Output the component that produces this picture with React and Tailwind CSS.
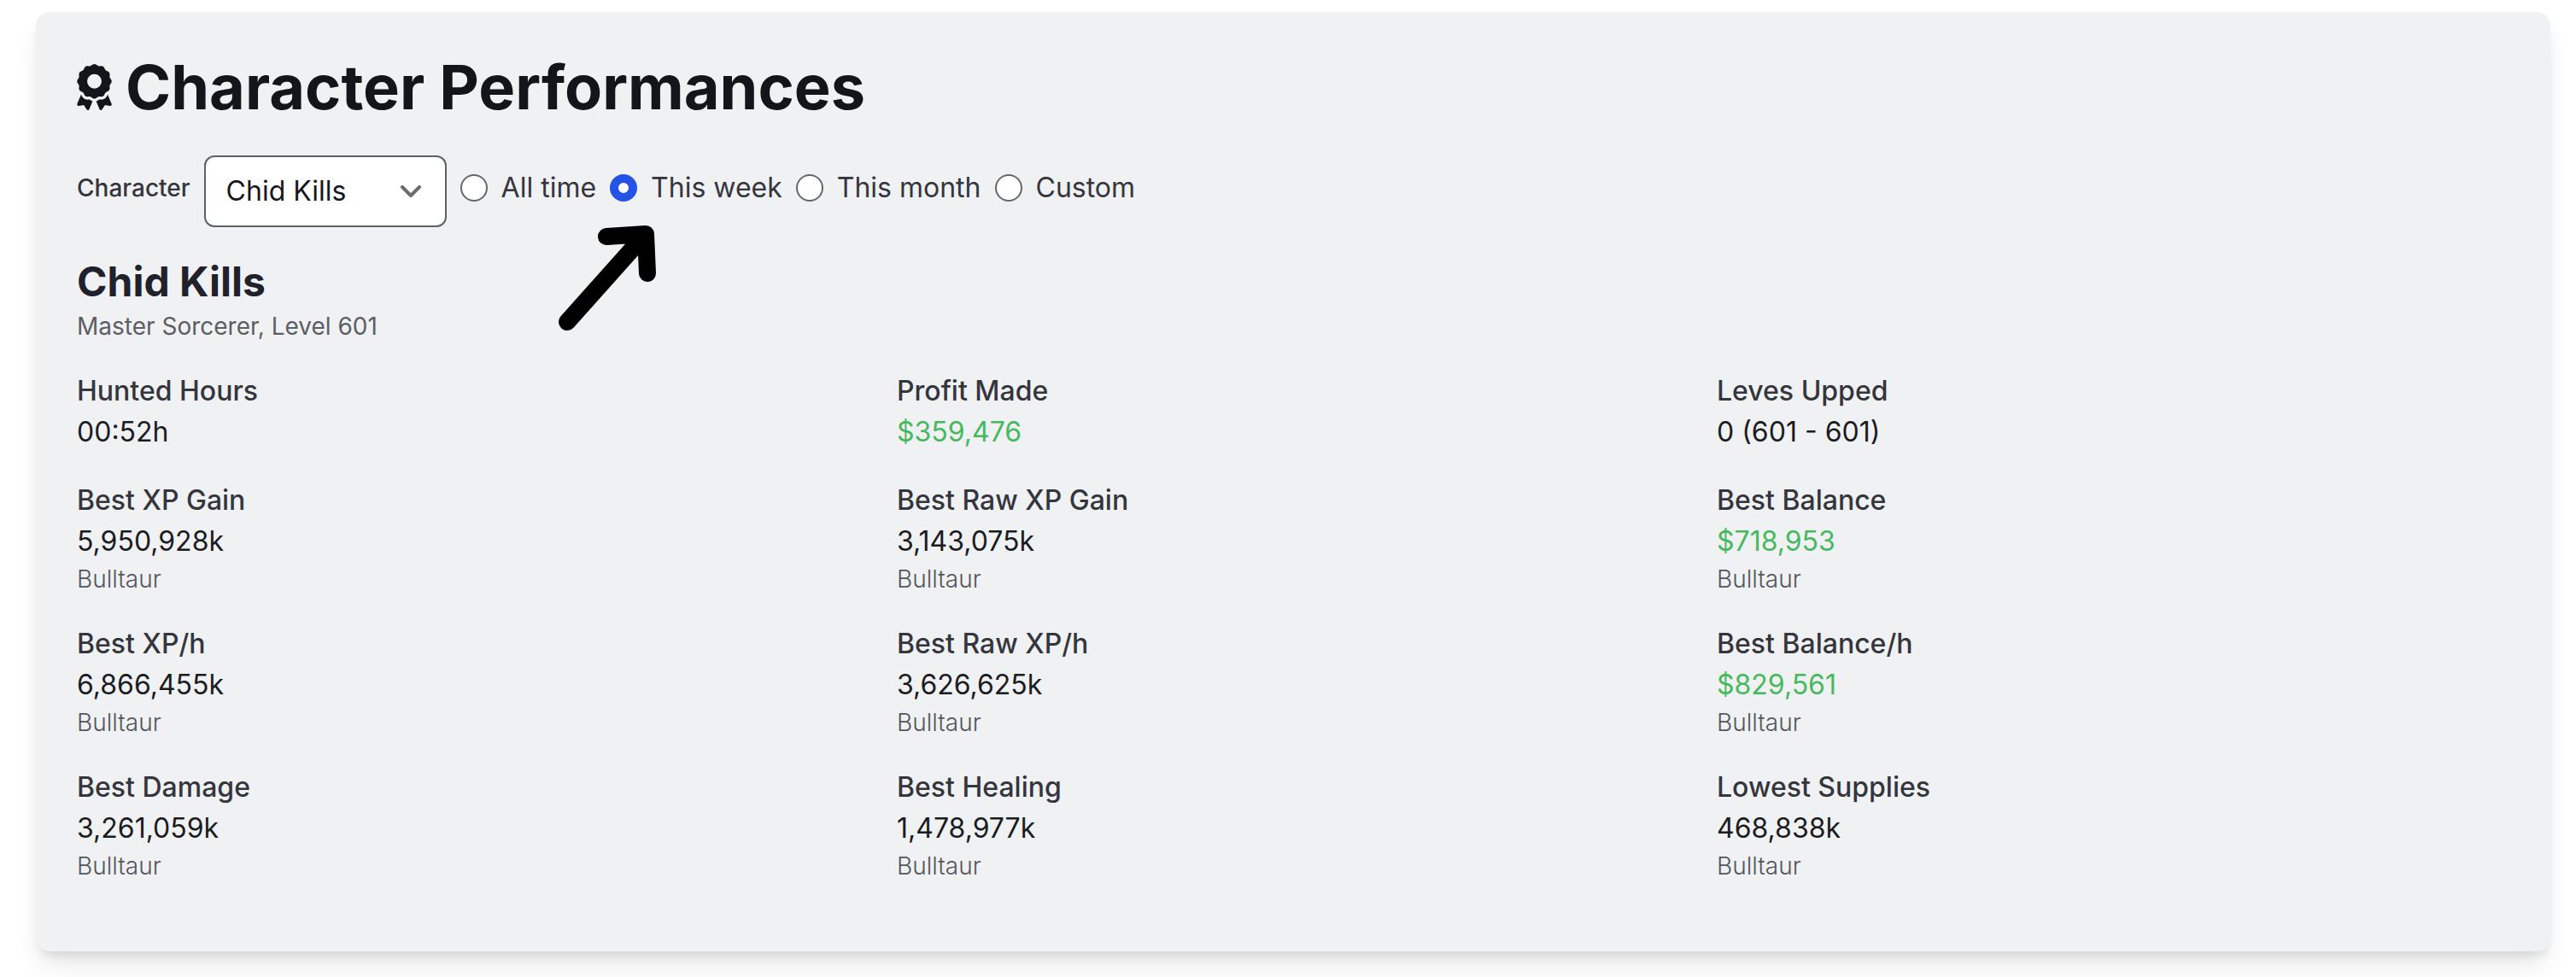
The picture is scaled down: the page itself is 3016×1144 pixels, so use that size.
import React, { useState } from "react";
import { FaAward } from "react-icons/fa6";

const periods = [
  { id: "all", label: "All time" },
  { id: "week", label: "This week" },
  { id: "month", label: "This month" },
  { id: "custom", label: "Custom" },
];

const stats = [
  { label: "Hunted Hours", value: "00:52h" },
  { label: "Profit Made", value: "$359,476", profit: true },
  { label: "Leves Upped", value: "0 (601 - 601)" },
  { label: "Best XP Gain", value: "5,950,928k", place: "Bulltaur" },
  { label: "Best Raw XP Gain", value: "3,143,075k", place: "Bulltaur" },
  { label: "Best Balance", value: "$718,953", place: "Bulltaur", profit: true },
  { label: "Best XP/h", value: "6,866,455k", place: "Bulltaur" },
  { label: "Best Raw XP/h", value: "3,626,625k", place: "Bulltaur" },
  { label: "Best Balance/h", value: "$829,561", place: "Bulltaur", profit: true },
  { label: "Best Damage", value: "3,261,059k", place: "Bulltaur" },
  { label: "Best Healing", value: "1,478,977k", place: "Bulltaur" },
  { label: "Lowest Supplies", value: "468,838k", place: "Bulltaur" },
];

const Stat = ({ label, value, place, profit }) => (
  <div>
    <dt className="text-[32px] leading-[48px] font-medium text-[#34353d]">{label}</dt>
    <dd className={`text-[32px] leading-[48px] ${profit ? "text-[#46b95e]" : "text-[#1b1c22]"}`}>{value}</dd>
    {place && <dd className="text-[28px] leading-[40px] font-light text-[#54565c]">{place}</dd>}
  </div>
);

const PeriodRadio = ({ id, label, checked, onChange }) => (
  <label className="flex items-center gap-4 pb-2 text-[32px] leading-[48px] text-[#34353d]">
    <input
      type="radio"
      name="period"
      value={id}
      checked={checked}
      onChange={onChange}
      className="size-8 shrink-0 appearance-none rounded-full border-2 border-[#66676c] bg-white checked:border-10 checked:border-[#2453e6]"
    />
    {label}
  </label>
);

const App = () => {
  const [character, setCharacter] = useState("Chid Kills");
  const [period, setPeriod] = useState("week");

  return (
    <main className="min-h-screen bg-white pt-[14px] pr-[30px] pb-[30px] pl-[42px] font-['Inter',sans-serif]">
      <section className="rounded-2xl bg-[#f0f1f3] px-12 pt-12 pb-20 shadow-[0_20px_30px_-6px_rgba(0,0,0,0.1),0_8px_12px_-4px_rgba(0,0,0,0.1)]">
        <h1 className="flex items-center gap-4 text-[72px] leading-[80px] font-bold text-[#14151b]">
          <FaAward className="h-[54px] w-[41px]" />
          Character Performances
        </h1>

        <form className="relative mt-10 flex items-center gap-4">
          <label htmlFor="character" className="pb-2 text-[28px] leading-[40px] font-medium text-[#34353d]">
            Character
          </label>
          <div className="grid items-center">
            <select
              id="character"
              value={character}
              onChange={(e) => setCharacter(e.target.value)}
              className="col-start-1 row-start-1 h-[84px] w-[284px] appearance-none rounded-xl border-2 border-[#5f6065] bg-white px-6 text-[32px] text-[#17181c]"
            >
              <option>Chid Kills</option>
            </select>
            <svg viewBox="0 0 24 14" fill="none" className="pointer-events-none col-start-1 row-start-1 mr-[30px] h-[14px] w-6 justify-self-end">
              <path d="M2 2l10 10L22 2" stroke="#6b6c70" strokeWidth="4" strokeLinecap="round" strokeLinejoin="round" />
            </svg>
          </div>
          {periods.map((p) => (
            <PeriodRadio key={p.id} {...p} checked={period === p.id} onChange={() => setPeriod(p.id)} />
          ))}
          {/* pointer to the weekly filter */}
          <svg viewBox="0 0 116 124" fill="none" className="pointer-events-none absolute top-[82px] left-[564px] h-[124px] w-[116px]">
            <path
              d="M10 113L102 10M56 13L102 10L104 56"
              stroke="black"
              strokeWidth="20"
              strokeLinecap="round"
              strokeLinejoin="round"
            />
          </svg>
        </form>

        <h2 className="mt-8 text-[48px] leading-[64px] font-bold text-[#20212a]">{character}</h2>
        <p className="text-[28px] leading-[40px] text-[#5c5e64]">Master Sorcerer, Level 601</p>

        <dl className="mt-8 grid grid-cols-3 gap-8">
          {stats.map((s) => (
            <Stat key={s.label} {...s} />
          ))}
        </dl>
      </section>
    </main>
  );
};

export default App;
